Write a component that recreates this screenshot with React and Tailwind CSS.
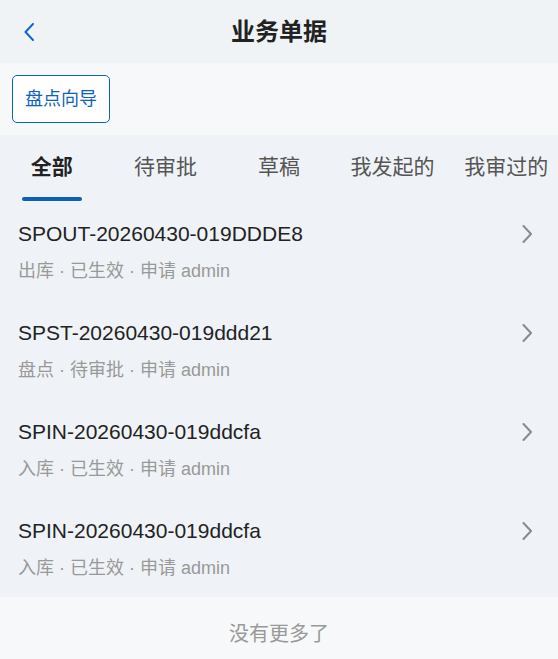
import { useState } from "react";

const tabs = ["全部", "待审批", "草稿", "我发起的", "我审过的"];

const docs = [
    { no: "SPOUT-20260430-019DDDE8", type: "出库", status: "已生效", user: "admin" },
    { no: "SPST-20260430-019ddd21", type: "盘点", status: "待审批", user: "admin" },
    { no: "SPIN-20260430-019ddcfa", type: "入库", status: "已生效", user: "admin" },
    { no: "SPIN-20260430-019ddcfa", type: "入库", status: "已生效", user: "admin" },
];

function Chevron({ dir = "right", className }) {
    const d = dir === "left" ? "M9 1 L1.5 9 L9 17" : "M1.5 1 L9 9 L1.5 17";
    return (
        <svg width="11" height="18" viewBox="0 0 11 18" fill="none" className={className}>
            <path d={d} stroke="currentColor" strokeWidth="2" strokeLinecap="round" strokeLinejoin="round" />
        </svg>
    );
}

export default function App() {
    const [active, setActive] = useState(0);

    return (
        <div className="min-h-screen w-full bg-[#eff3f7] font-['Liberation_Sans','Noto_Sans_CJK_SC',sans-serif]">
            {/* top bar */}
            <div className="flex h-[63px] items-center bg-[#f0f3f6]">
                <div className="w-[70px] pl-[24px] text-[#1466c8]">
                    <Chevron dir="left" />
                </div>
                <h1 className="flex-1 text-center text-[24px] font-bold leading-[30px] text-[#222]">业务单据</h1>
                <div className="w-[70px]" />
            </div>

            {/* toolbar */}
            <div className="h-[72px] bg-[#f6f8fa] px-[12px] pt-[12px]">
                <button className="h-[48px] w-[98px] rounded-[5px] border border-[#0d62c0] bg-white text-[18px] text-[#0d62c0]">
                    盘点向导
                </button>
            </div>

            {/* tabs */}
            <div className="h-[66px] overflow-hidden">
                <div className="-ml-[5px] flex">
                    {tabs.map((t, i) => (
                        <div
                            key={t}
                            onClick={() => setActive(i)}
                            className="flex w-[113.6px] shrink-0 cursor-pointer flex-col items-center pt-[18px]"
                        >
                            <span
                                className={
                                    i === active
                                        ? "text-[21px] font-bold leading-[28px] text-[#222]"
                                        : "text-[21px] leading-[28px] text-[#555]"
                                }
                            >
                                {t}
                            </span>
                            <div
                                className={
                                    i === active
                                        ? "mt-[16px] h-[4px] w-[60px] rounded-full bg-[#0a5fb8]"
                                        : "mt-[16px] h-[4px] w-[60px]"
                                }
                            />
                        </div>
                    ))}
                </div>
            </div>

            {/* list */}
            <div>
                {docs.map((d, i) => (
                    <div key={i} className="flex h-[99px] pl-[18px] pr-[25px] pt-[19px]">
                        <div className="flex-1">
                            <div className="text-[21px] leading-[28px] text-[#222]">{d.no}</div>
                            <div className="mt-[10px] text-[18px] leading-[26px] text-[#999]">
                                {d.type} · {d.status} · 申请 {d.user}
                            </div>
                        </div>
                        <div className="flex h-[28px] items-center text-[#8a8a8a]">
                            <Chevron />
                        </div>
                    </div>
                ))}
            </div>

            <div className="h-[62px] bg-[#f6f8fa] pt-[23px] text-center text-[20px] leading-[28px] text-[#999]">
                没有更多了
            </div>
        </div>
    );
}
